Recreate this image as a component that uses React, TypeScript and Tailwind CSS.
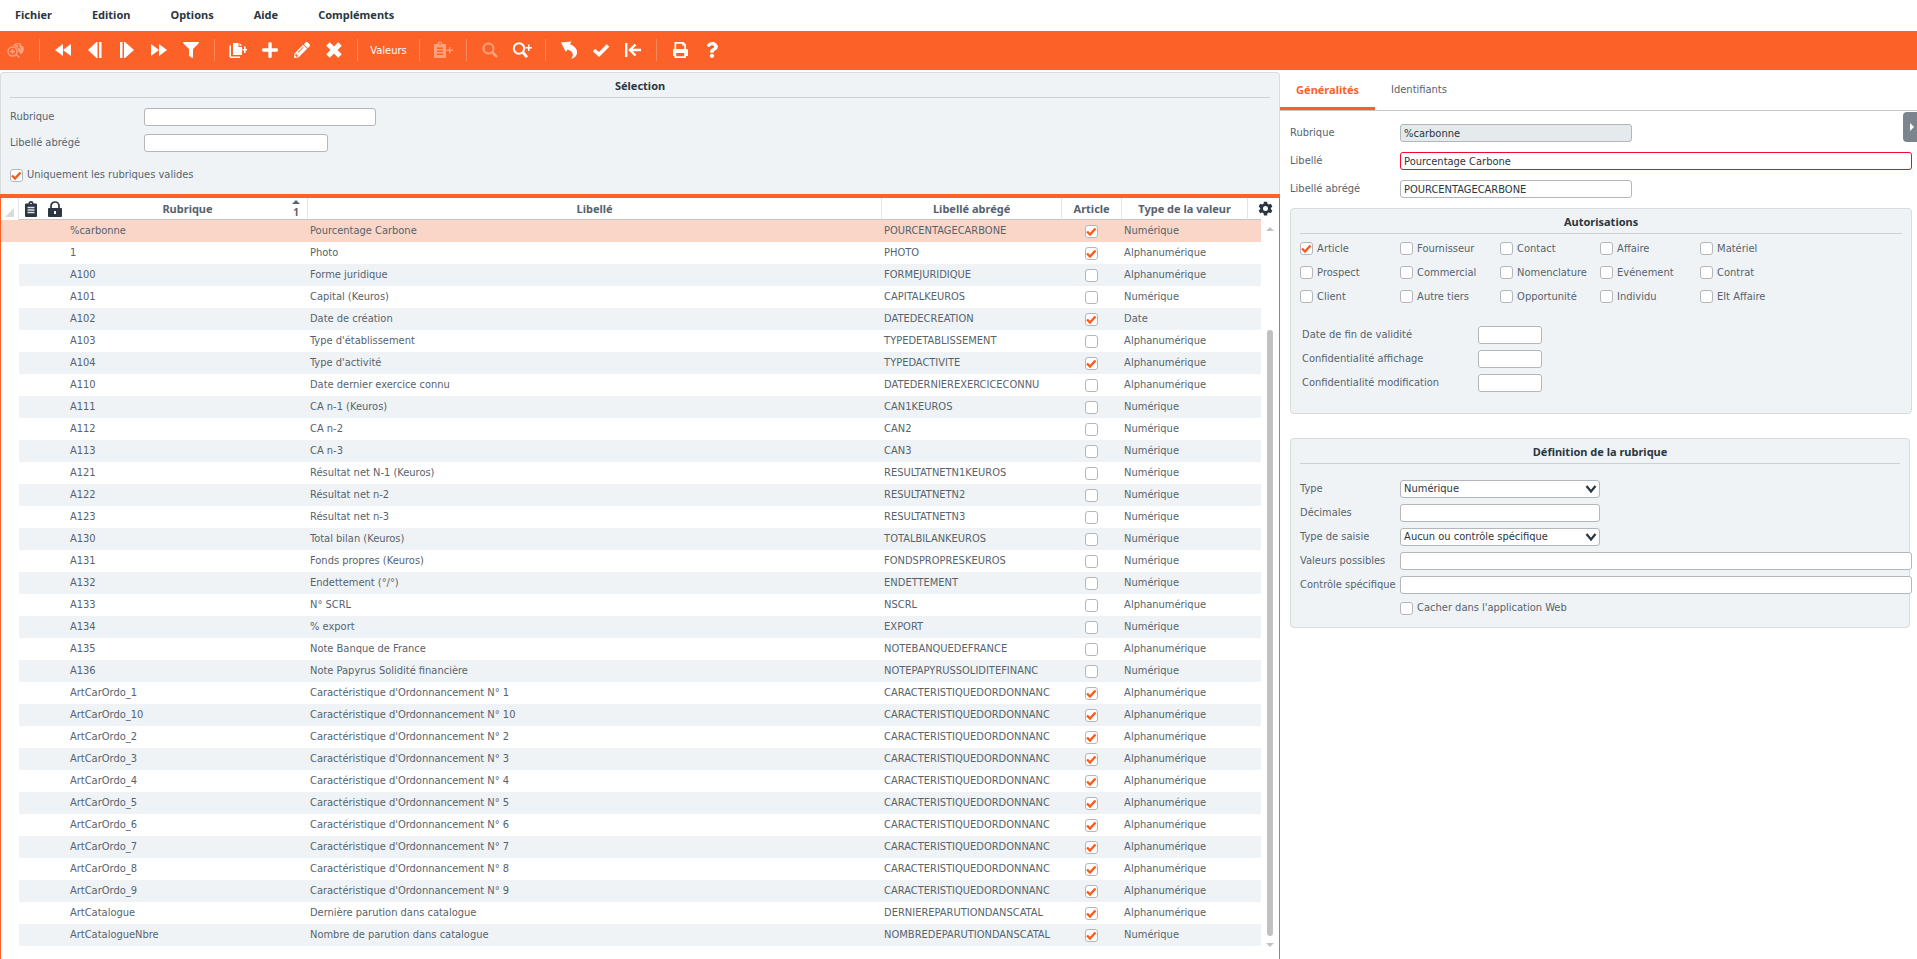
import { useState } from "react";
import type { ReactNode } from "react";
import { FaFilter, FaPencilAlt, FaPlus, FaQuestion } from "react-icons/fa";

interface Row {
  code: string;
  label: string;
  short: string;
  article: boolean;
  type: string;
}

const NUM = "Numérique";
const ALPHA = "Alphanumérique";

const row = (
  code: string,
  label: string,
  short: string,
  article: boolean,
  type: string,
): Row => ({ code, label, short, article, type });

const rows: Row[] = [
  row("%carbonne", "Pourcentage Carbone", "POURCENTAGECARBONE", true, NUM),
  row("1", "Photo", "PHOTO", true, ALPHA),
  row("A100", "Forme juridique", "FORMEJURIDIQUE", false, ALPHA),
  row("A101", "Capital (Keuros)", "CAPITALKEUROS", false, NUM),
  row("A102", "Date de création", "DATEDECREATION", true, "Date"),
  row("A103", "Type d'établissement", "TYPEDETABLISSEMENT", false, ALPHA),
  row("A104", "Type d'activité", "TYPEDACTIVITE", true, ALPHA),
  row("A110", "Date dernier exercice connu", "DATEDERNIEREXERCICECONNU", false, ALPHA),
  row("A111", "CA n-1 (Keuros)", "CAN1KEUROS", false, NUM),
  row("A112", "CA n-2", "CAN2", false, NUM),
  row("A113", "CA n-3", "CAN3", false, NUM),
  row("A121", "Résultat net N-1 (Keuros)", "RESULTATNETN1KEUROS", false, NUM),
  row("A122", "Résultat net n-2", "RESULTATNETN2", false, NUM),
  row("A123", "Résultat net n-3", "RESULTATNETN3", false, NUM),
  row("A130", "Total bilan (Keuros)", "TOTALBILANKEUROS", false, NUM),
  row("A131", "Fonds propres (Keuros)", "FONDSPROPRESKEUROS", false, NUM),
  row("A132", "Endettement (°/°)", "ENDETTEMENT", false, NUM),
  row("A133", "N° SCRL", "NSCRL", false, ALPHA),
  row("A134", "% export", "EXPORT", false, NUM),
  row("A135", "Note Banque de France", "NOTEBANQUEDEFRANCE", false, ALPHA),
  row("A136", "Note Papyrus Solidité financière", "NOTEPAPYRUSSOLIDITEFINANC", false, NUM),
  ...[1, 10, 2, 3, 4, 5, 6, 7, 8, 9].map((n) =>
    row(
      `ArtCarOrdo_${n}`,
      `Caractéristique d'Ordonnancement N° ${n}`,
      "CARACTERISTIQUEDORDONNANC",
      true,
      ALPHA,
    ),
  ),
  row("ArtCatalogue", "Dernière parution dans catalogue", "DERNIEREPARUTIONDANSCATAL", true, ALPHA),
  row("ArtCatalogueNbre", "Nombre de parution dans catalogue", "NOMBREDEPARUTIONDANSCATAL", true, NUM),
];

const permissions = [
  "Article", "Fournisseur", "Contact", "Affaire", "Matériel",
  "Prospect", "Commercial", "Nomenclature", "Evénement", "Contrat",
  "Client", "Autre tiers", "Opportunité", "Individu", "Elt Affaire",
];

const inputStyle =
  "h-[18px] rounded-[3px] border border-[#b3b7bc] bg-white px-[3px] text-[#2b3640] outline-none";

const boldStyle = "font-['Noto_Sans',sans-serif] font-bold";

/* ---------- Icons ---------- */

function Svg({ children, w = 18 }: { children: ReactNode; w?: number }) {
  return (
    <svg width={w} height="18" viewBox={`0 0 ${w} 18`} fill="currentColor" aria-hidden="true">
      {children}
    </svg>
  );
}

const GlobeSearchIcon = () => (
  <Svg>
    <path d="M7 3.500A6 6 0 1 1 14 13.200l-2.600-2.700A6 6 0 0 0 6 4.700z" />
    <path d="M9.500 3.500 12 4l-.5 2 2 1.500M14.500 2.500l.5 2 2 .5" fill="none" stroke="#fc6227" strokeWidth="1.200" />
    <circle cx="5.500" cy="10.500" r="4.500" fill="none" stroke="currentColor" strokeWidth="1.400" />
    <path d="M5.500 8v5M3 10.500h5M9 13.500l3.500 3" fill="none" stroke="currentColor" strokeWidth="1.600" />
  </Svg>
);
const FirstIcon = () => (
  <Svg>
    <path d="M9 3v12L1 9zM17 3v12L9 9z" />
  </Svg>
);
const PrevIcon = () => (
  <Svg>
    <path d="M11.500 1v16h-1L2 9l8.500-8zM13 1h2.500v16H13z" />
  </Svg>
);
const NextIcon = () => (
  <Svg>
    <path d="M2 1h2.500v16H2zM6 1v16h1l9-8-9-8z" />
  </Svg>
);
const LastIcon = () => (
  <Svg>
    <path d="M1 3v12l8-6zM9 3v12l8-6z" />
  </Svg>
);
const DuplicateIcon = () => (
  <Svg>
    <path d="M4 2h5.500v4H13v8H4z" />
    <path d="M10.500 2 13 4.800h-2.500z" />
    <path d="M1.200 4.500v10.700a1 1 0 0 0 1 1H11" fill="none" stroke="currentColor" strokeWidth="1.600" />
    <path d="M15 5.500h1.500V8h2v1.500h-2V12H15V9.500h-1.500V8H15z" />
  </Svg>
);
const CrossIcon = () => (
  <Svg>
    <path d="m3 3 12 12m0-12-12 12" stroke="currentColor" strokeWidth="5" />
  </Svg>
);
const PasteIcon = () => (
  <Svg w={20}>
    <path
      fillRule="evenodd"
      d="M1 3h3.500a2.500 2.500 0 0 1 5 0H13v14H1zm5.200-.2a.9.9 0 1 0 1.800 0 .9.900 0 0 0-1.800 0zM4 6.500V8h6V6.500zm0 3V11h6V9.500zm0 3V14h6v-1.500z"
    />
    <path d="M16 6h1.500v2.500H20V10h-2.500v2.500H16V10h-2.500V8.500H16z" />
  </Svg>
);
const SearchIcon = () => (
  <Svg>
    <circle cx="7.500" cy="7.500" r="5" fill="none" stroke="currentColor" strokeWidth="2" />
    <path d="m11 11 5 5.200" stroke="currentColor" strokeWidth="2.600" />
  </Svg>
);
const SearchPlusIcon = () => (
  <Svg w={20}>
    <circle cx="7" cy="7.500" r="5.200" fill="none" stroke="currentColor" strokeWidth="2" />
    <path d="m10.500 11 4.500 5.200" stroke="currentColor" strokeWidth="2.800" />
    <path d="M16 3.500h1.500V6H20v1.500h-2.500V10H16V7.500h-2.500V6H16z" />
  </Svg>
);
const UndoIcon = () => (
  <Svg>
    <path d="M1 1.500 11.500.5 10 3.200c4.500 1.500 7.500 5 7 8.800-.3 2.500-2 4.500-4.500 5.500-.8.200-1.300-.2-.8-.8 2.500-3 1-6.500-4.200-8.200L5.800 11z" />
  </Svg>
);
const CheckIcon = () => (
  <Svg>
    <path d="m2 9 5 4.500L16 4.500" fill="none" stroke="currentColor" strokeWidth="3.600" />
  </Svg>
);
const ExitIcon = () => (
  <Svg>
    <path d="M2.200 2v14M17 9H6M11.500 3.500 6 9l5.500 5.500" fill="none" stroke="currentColor" strokeWidth="2.400" />
  </Svg>
);
const PrintIcon = () => (
  <Svg>
    <path
      fillRule="evenodd"
      d="M3.500 1h9L15 3.500V8h1a1 1 0 0 1 1 1v6h-2v2H3.500v-2H2V9a1 1 0 0 1 1-1h.5zm1.700 1.700V8h8V4.500h-2V2.700zM5.200 12v3.300h8V12z"
    />
  </Svg>
);
const GearIcon = () => (
  <svg width="15" height="15" viewBox="0 0 24 24" fill="currentColor" aria-hidden="true">
    <path
      fillRule="evenodd"
      d="M9.500 1h5l.7 3.300 2 1.200 3.300-1L23 8.800 20.500 11v2l2.500 2.200-2.500 4.300-3.300-1-2 1.200-.7 3.300h-5l-.7-3.300-2-1.200-3.300 1L1 15.200 3.500 13v-2L1 8.800l2.500-4.300 3.300 1 2-1.200zM12 8a4 4 0 1 0 0 8 4 4 0 0 0 0-8z"
    />
  </svg>
);
const ClipboardIcon = () => (
  <svg width="12" height="16" viewBox="0 0 12 16" className="mx-auto" role="img" aria-label="Notes">
    <path fill="#2b3640" d="M1 2.500h2.500a2.500 2.500 0 0 1 5 0H11a1 1 0 0 1 1 1V15a1 1 0 0 1-1 1H1a1 1 0 0 1-1-1V3.500a1 1 0 0 1 1-1z" />
    <circle cx="6" cy="2.500" r=".8" fill="#fff" />
    <path d="M2.500 6.500h7M2.500 9h7M2.500 11.500h7" stroke="#dfe3e6" strokeWidth="1.500" />
  </svg>
);
const LockIcon = () => (
  <svg width="14" height="16" viewBox="0 0 14 16" className="mx-auto" role="img" aria-label="Verrou">
    <path d="M3 8V5a4 4 0 0 1 8 0v3" fill="none" stroke="#2b3640" strokeWidth="1.700" />
    <rect y="7" width="14" height="9" rx="1" fill="#2b3640" />
    <rect x="6" y="10" width="2" height="3" fill="#fff" />
  </svg>
);

/* ---------- Small parts ---------- */

function ToolButton({
  label,
  disabled,
  children,
}: {
  label: string;
  disabled?: boolean;
  children: ReactNode;
}) {
  return (
    <button
      type="button"
      aria-label={label}
      disabled={disabled}
      className="flex h-8 w-8 items-center justify-center text-[16px] disabled:opacity-40"
    >
      {children}
    </button>
  );
}

const Separator = () => <div className="mx-[7px] h-[22px] w-px bg-white/25" />;

function Checkbox({
  id,
  label,
  defaultChecked,
}: {
  id?: string;
  label?: string;
  defaultChecked?: boolean;
}) {
  return (
    <span className="relative block h-[13px] w-[13px] shrink-0">
      <input
        id={id}
        aria-label={label}
        type="checkbox"
        defaultChecked={defaultChecked}
        className="peer block h-[13px] w-[13px] appearance-none rounded-[3px] border border-[#b3b7bc] bg-white"
      />
      <svg
        viewBox="0 0 13 13"
        className="pointer-events-none absolute inset-0 hidden h-[13px] w-[13px] peer-checked:block"
        aria-hidden="true"
      >
        <path d="m2 6.500 3 3 5.500-6" fill="none" stroke="#fc5a1c" strokeWidth="2.400" />
      </svg>
    </span>
  );
}

function CheckField({ id, label, checked }: { id: string; label: string; checked?: boolean }) {
  return (
    <div className="flex items-center gap-1">
      <Checkbox id={id} defaultChecked={checked} />
      <label htmlFor={id} className="whitespace-nowrap">
        {label}
      </label>
    </div>
  );
}

function Field({ id, label, children }: { id: string; label: string; children: ReactNode }) {
  return (
    <div className="flex items-center">
      <label htmlFor={id} className="w-[100px] shrink-0 whitespace-nowrap">
        {label}
      </label>
      {children}
    </div>
  );
}

function SelectBox({ id, options }: { id: string; options: string[] }) {
  return (
    <div className="relative w-[200px]">
      <select id={id} className={`${inputStyle} block w-full appearance-none`}>
        {options.map((o) => (
          <option key={o}>{o}</option>
        ))}
      </select>
      <svg
        width="12"
        height="9"
        viewBox="0 0 12 9"
        className="pointer-events-none absolute top-[5px] right-[3px]"
        aria-hidden="true"
      >
        <path d="m1.500 1 4.500 5.500L10.500 1" fill="none" stroke="#2b3640" strokeWidth="2.200" />
      </svg>
    </div>
  );
}

function PanelTitle({ children }: { children: ReactNode }) {
  return (
    <h2 className={`${boldStyle} border-b border-[#ccd0d3] pt-[5px] pb-[3px] text-center text-[#2b3640]`}>
      {children}
    </h2>
  );
}

/* ---------- Sections ---------- */

function MenuBar() {
  return (
    <nav className={`${boldStyle} flex h-[31px] items-center gap-10 px-[15px] pb-[2px] text-[#2b3640]`}>
      {["Fichier", "Edition", "Options", "Aide", "Compléments"].map((item) => (
        <button key={item} type="button">
          {item}
        </button>
      ))}
    </nav>
  );
}

function Toolbar() {
  return (
    <div className="flex h-[39px] items-center bg-[#fc6227] pb-[2px] text-white">
      <ToolButton label="Assistant" disabled><GlobeSearchIcon /></ToolButton>
      <Separator />
      <ToolButton label="Premier"><FirstIcon /></ToolButton>
      <ToolButton label="Précédent"><PrevIcon /></ToolButton>
      <ToolButton label="Suivant"><NextIcon /></ToolButton>
      <ToolButton label="Dernier"><LastIcon /></ToolButton>
      <ToolButton label="Filtrer"><FaFilter /></ToolButton>
      <Separator />
      <ToolButton label="Dupliquer"><DuplicateIcon /></ToolButton>
      <ToolButton label="Ajouter"><FaPlus size={18} /></ToolButton>
      <ToolButton label="Modifier"><FaPencilAlt /></ToolButton>
      <ToolButton label="Supprimer"><CrossIcon /></ToolButton>
      <Separator />
      <button type="button" className="w-[47px] pt-[2px] text-center">Valeurs</button>
      <Separator />
      <ToolButton label="Coller" disabled><PasteIcon /></ToolButton>
      <Separator />
      <ToolButton label="Rechercher" disabled><SearchIcon /></ToolButton>
      <ToolButton label="Recherche avancée"><SearchPlusIcon /></ToolButton>
      <Separator />
      <ToolButton label="Annuler"><UndoIcon /></ToolButton>
      <ToolButton label="Valider"><CheckIcon /></ToolButton>
      <ToolButton label="Quitter"><ExitIcon /></ToolButton>
      <Separator />
      <ToolButton label="Imprimer"><PrintIcon /></ToolButton>
      <ToolButton label="Aide"><FaQuestion /></ToolButton>
    </div>
  );
}

function SelectionPanel() {
  return (
    <section className="rounded-t border border-b-0 border-[#d9dcd8] bg-[#eff3f6] px-[9px] pb-[11px]">
      <PanelTitle>Sélection</PanelTitle>
      <div className="mt-[10px] flex flex-col gap-2">
        <div className="flex items-center">
          <label htmlFor="sel-rubrique" className="w-[134px]">Rubrique</label>
          <input id="sel-rubrique" type="text" className={`${inputStyle} w-[232px]`} />
        </div>
        <div className="flex items-center">
          <label htmlFor="sel-abrege" className="w-[134px]">Libellé abrégé</label>
          <input id="sel-abrege" type="text" className={`${inputStyle} w-[184px]`} />
        </div>
      </div>
      <div className="mt-[15px]">
        <CheckField id="sel-valides" label="Uniquement les rubriques valides" checked />
      </div>
    </section>
  );
}

function DataGrid() {
  const [selected, setSelected] = useState(0);
  const th = "h-[22px] border-b border-l border-b-[#c3c6c8] border-l-[#e2e4e6] p-0";

  return (
    <section className="relative flex flex-1 items-start border-x border-t-4 border-[#fc6227]">
      <div className="min-w-0 flex-1">
        <table className="w-full table-fixed border-separate border-spacing-0">
          <colgroup>
            <col className="w-[18px]" />
            <col className="w-6" />
            <col className="w-6" />
            <col className="w-[240px]" />
            <col />
            <col className="w-[180px]" />
            <col className="w-[60px]" />
            <col className="w-[126px]" />
            <col className="w-[14px]" />
          </colgroup>
          <thead className={boldStyle}>
            <tr>
              <th className="h-[22px] border-r border-[#e2e4e6] p-0 align-bottom">
                <svg width="9" height="9" viewBox="0 0 9 9" className="mb-[3px] ml-1" aria-hidden="true">
                  <path d="M9 0v9H0z" fill="#d8dadc" />
                </svg>
              </th>
              <th className="border-b border-[#c3c6c8] p-0"><ClipboardIcon /></th>
              <th className="border-b border-[#c3c6c8] p-0"><LockIcon /></th>
              <th className="border-b border-[#c3c6c8] p-0">
                <div className="flex items-center">
                  <span className="flex-1 pl-4">Rubrique</span>
                  <span className="mr-[7px] flex w-2 flex-col items-center gap-px pt-[2px]">
                    <svg width="8" height="4" viewBox="0 0 8 4" aria-hidden="true">
                      <path d="M4 0 8 4H0z" fill="#56636e" />
                    </svg>
                    <span className="text-[10px] leading-[14px]">1</span>
                  </span>
                </div>
              </th>
              <th className={th}>Libellé</th>
              <th className={th}>Libellé abrégé</th>
              <th className={th}>Article</th>
              <th className={th}>Type de la valeur</th>
              <th className={th} />
            </tr>
          </thead>
          <tbody>
            {rows.map((r, i) => {
              const active = i === selected;
              const stripe = active ? "bg-[#f9d6c7]" : i % 2 === 0 ? "bg-[#eff3f6]" : "bg-white";
              return (
                <tr key={r.code} onClick={() => setSelected(i)}>
                  <td className={`h-[22px] p-0 ${active ? "bg-[#f9d6c7]" : ""}`} />
                  <td className={`p-0 ${stripe}`} />
                  <td className={`p-0 ${stripe}`} />
                  <td className={`px-[3px] py-0 ${stripe}`}>{r.code}</td>
                  <td className={`px-[3px] py-0 ${stripe}`}>{r.label}</td>
                  <td className={`truncate px-[3px] py-0 ${stripe}`}>{r.short}</td>
                  <td className={`p-0 ${stripe}`}>
                    <div className="flex justify-center">
                      <Checkbox label={`Article ${r.code}`} defaultChecked={r.article} />
                    </div>
                  </td>
                  <td className={`px-[3px] py-0 ${stripe}`}>{r.type}</td>
                  <td className={`p-0 ${stripe}`} />
                </tr>
              );
            })}
          </tbody>
        </table>
      </div>

      {/* Scrollbar */}
      <div className="flex w-[18px] flex-col items-center self-start pt-[29px]">
        <svg width="8" height="4" viewBox="0 0 8 4" aria-hidden="true">
          <path d="m4 0 4 4H0z" fill="#c0c2c4" />
        </svg>
        <div className="flex h-[705px] flex-col justify-end">
          <div className="h-[86%] w-[6px] rounded-full bg-[#bfc1c2]" />
        </div>
        <svg width="8" height="4" viewBox="0 0 8 4" className="mt-[7px]" aria-hidden="true">
          <path d="m0 0 4 4 4-4z" fill="#c0c2c4" />
        </svg>
      </div>
      <button type="button" aria-label="Paramètres" className="absolute top-[3px] right-[6px] text-[#2b3640]">
        <GearIcon />
      </button>
    </section>
  );
}

function DetailPanel() {
  return (
    <aside className="relative min-w-0">
      <div role="tablist" className="flex h-[39px] border-b border-[#c3c6c8]">
        <button
          type="button"
          role="tab"
          aria-selected="true"
          className={`${boldStyle} border-b-[3px] border-[#fc6227] px-4 text-[#fc6227]`}
        >
          Généralités
        </button>
        <button type="button" role="tab" aria-selected="false" className="border-b-[3px] border-transparent px-4">
          Identifiants
        </button>
      </div>
      <button
        type="button"
        aria-label="Replier le volet"
        className="absolute top-10 right-0 flex h-[30px] w-[14px] items-center justify-center rounded-l bg-[#7c858d]"
      >
        <svg width="5" height="8" viewBox="0 0 5 8" className="ml-1" aria-hidden="true">
          <path d="m0 0 4 4-4 4z" fill="#fff" />
        </svg>
      </button>

      <div className="pr-[5px] pl-[10px]">
        <div className="mt-[13px] flex flex-col gap-[10px]">
          <div className="flex items-center">
            <label htmlFor="rubrique" className="w-[110px] shrink-0">Rubrique</label>
            <input
              id="rubrique"
              readOnly
              defaultValue="%carbonne"
              className="h-[18px] w-[232px] rounded-[3px] border border-[#b3b7bc] bg-[#e5eaed] px-[3px] text-[#2b3640] outline-none"
            />
          </div>
          <div className="flex items-center">
            <label htmlFor="libelle" className="w-[110px] shrink-0">Libellé</label>
            <input
              id="libelle"
              defaultValue="Pourcentage Carbone"
              className="h-[18px] min-w-0 flex-1 rounded-[3px] border border-[#f5062f] bg-white px-[3px] text-[#2b3640] outline-none"
            />
          </div>
          <div className="flex items-center">
            <label htmlFor="abrege" className="w-[110px] shrink-0">Libellé abrégé</label>
            <input id="abrege" defaultValue="POURCENTAGECARBONE" className={`${inputStyle} w-[232px]`} />
          </div>
        </div>

        <section className="mt-[10px] rounded border border-[#d9dcd8] bg-[#eff3f6] px-[9px] pb-[21px]">
          <PanelTitle>Autorisations</PanelTitle>
          <div className="mt-2 grid grid-cols-[repeat(5,100px)] gap-y-[11px] leading-[13px]">
            {permissions.map((p) => (
              <CheckField key={p} id={`perm-${p}`} label={p} checked={p === "Article"} />
            ))}
          </div>
          <div className="mt-[23px] flex flex-col gap-[6px] pl-[2px]">
            {["Date de fin de validité", "Confidentialité affichage", "Confidentialité modification"].map(
              (label) => (
                <div key={label} className="flex items-center">
                  <label htmlFor={label} className="w-44">{label}</label>
                  <input id={label} type="text" className={`${inputStyle} w-16`} />
                </div>
              ),
            )}
          </div>
        </section>

        <section className="mt-6 mr-[2px] rounded border border-[#d9dcd8] bg-[#eff3f6] px-[9px] pb-[11px]">
          <PanelTitle>Définition de la rubrique</PanelTitle>
          {/* the long inputs run slightly past the panel edge */}
          <div className="mt-4 -mr-3 flex flex-col gap-[6px]">
            <Field id="type" label="Type">
              <SelectBox id="type" options={["Numérique", "Alphanumérique", "Date"]} />
            </Field>
            <Field id="decimales" label="Décimales">
              <input id="decimales" type="text" className={`${inputStyle} w-[200px]`} />
            </Field>
            <Field id="saisie" label="Type de saisie">
              <SelectBox id="saisie" options={["Aucun ou contrôle spécifique"]} />
            </Field>
            <Field id="valeurs" label="Valeurs possibles">
              <input id="valeurs" type="text" className={`${inputStyle} min-w-0 flex-1`} />
            </Field>
            <Field id="controle" label="Contrôle spécifique">
              <input id="controle" type="text" className={`${inputStyle} min-w-0 flex-1`} />
            </Field>
            <div className="pl-[100px]">
              <CheckField id="cacher" label="Cacher dans l'application Web" />
            </div>
          </div>
        </section>
      </div>
    </aside>
  );
}

export default function App() {
  return (
    <div className="flex min-h-screen flex-col bg-white font-['DejaVu_Sans_Condensed','Noto_Sans',sans-serif] text-[11px] leading-[16px] text-[#56636e]">
      <MenuBar />
      <Toolbar />
      <main className="grid flex-1 grid-cols-[201fr_100fr] pt-[2px]">
        <div className="flex min-w-0 flex-col">
          <SelectionPanel />
          <DataGrid />
        </div>
        <DetailPanel />
      </main>
    </div>
  );
}
